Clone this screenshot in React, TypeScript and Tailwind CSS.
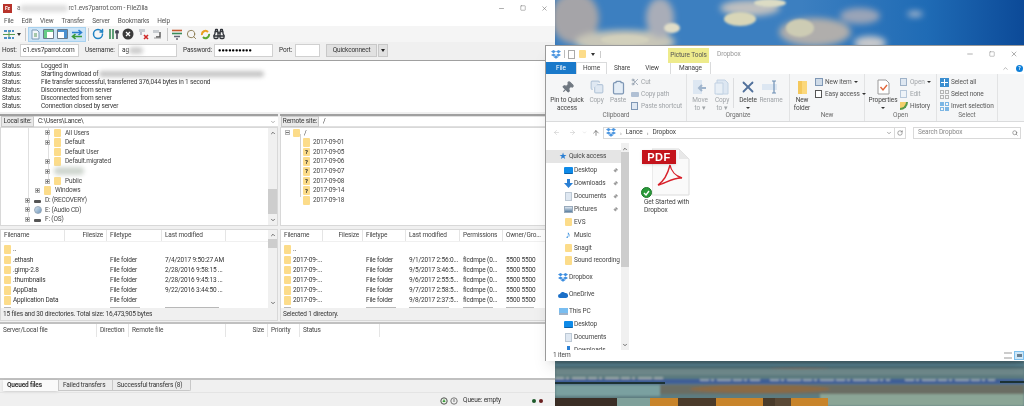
import { FC, ReactNode } from "react";
import {
  Binoculars,
  ChevronDown,
  ChevronUp,
  ArrowLeft,
  ArrowRight,
  ArrowUp,
  Clipboard,
  Copy,
  Minus,
  Pin,
  RotateCw,
  Scissors,
  Search,
  Square,
  X,
} from "lucide-react";

const logLines = [
  ["Status:", "Logged in"],
  ["Status:", "Starting download of"],
  ["Status:", "File transfer successful, transferred 376,044 bytes in 1 second"],
  ["Status:", "Disconnected from server"],
  ["Status:", "Disconnected from server"],
  ["Status:", "Connection closed by server"],
];

const localFiles = [
  ["..", "", "", ""],
  [".ethash", "", "File folder", "7/4/2017 9:50:27 AM"],
  [".gimp-2.8", "", "File folder", "2/28/2016 9:58:15 ..."],
  [".thumbnails", "", "File folder", "2/28/2016 9:45:13 ..."],
  ["AppData", "", "File folder", "9/22/2016 3:44:50 ..."],
  ["Application Data", "", "File folder", ""],
];

const remoteFiles = [
  ["..", "", "", "", "", ""],
  ["2017-09-...", "", "File folder", "9/1/2017 2:56:0...", "flcdmpe (0...", "5500 5500"],
  ["2017-09-...", "", "File folder", "9/5/2017 3:46:5...", "flcdmpe (0...", "5500 5500"],
  ["2017-09-...", "", "File folder", "9/6/2017 2:55:5...", "flcdmpe (0...", "5500 5500"],
  ["2017-09-...", "", "File folder", "9/7/2017 2:58:5...", "flcdmpe (0...", "5500 5500"],
  ["2017-09-...", "", "File folder", "9/8/2017 2:37:5...", "flcdmpe (0...", "5500 5500"],
];

const remoteDirs = [
  ["2017-09-01", false],
  ["2017-09-05", true],
  ["2017-09-06", true],
  ["2017-09-07", true],
  ["2017-09-08", true],
  ["2017-09-14", true],
  ["2017-09-18", false],
] as const;

const Folder: FC<{ q?: boolean }> = ({ q }) => (
  <span className="w-[7px] h-[8.5px] shrink-0 bg-[#fcdc8a] rounded-[1px] flex items-center justify-center text-[6px] font-bold leading-none text-[#222]">
    {q ? "?" : ""}
  </span>
);

const Expander: FC<{ minus?: boolean }> = ({ minus }) => (
  <span className="relative w-[5px] h-[5px] shrink-0 border border-[#b5b5b5] bg-[#f4f4f4] flex items-center justify-center">
    <span className="w-[3px] h-px bg-[#777]" />
    {!minus && <span className="absolute w-px h-[3px] bg-[#777]" />}
  </span>
);

const Redacted: FC<{ className: string }> = ({ className }) => (
  <span className={`inline-block blur-[2px] rounded-sm ${className}`} />
);

const TreeRow: FC<{ pad: string; label: string; expander?: boolean; icon?: ReactNode }> = ({
  pad,
  label,
  expander,
  icon,
}) => (
  <div className={`h-[9.65px] shrink-0 flex items-center ${pad}`}>
    <span className="w-[6px] mr-[3px] flex items-center">{expander && <Expander />}</span>
    {icon ?? <Folder />}
    <span className="ml-[4px]">{label}</span>
  </div>
);

const Drive: FC<{ cd?: boolean }> = ({ cd }) =>
  cd ? (
    <span className="w-[8px] h-[8px] shrink-0 rounded-full bg-gradient-to-br from-[#d8e4ee] to-[#6f98bd] border border-[#9ab] -mr-px" />
  ) : (
    <span className="w-[7px] h-[3px] shrink-0 bg-[#555] rounded-[1px] mt-[2px]" />
  );

const HeadCell: FC<{ w: string; right?: boolean; children?: ReactNode }> = ({ w, right, children }) => (
  <div className={`${w} shrink-0 h-full border-r border-[#e5e5e5] flex items-center px-[3px] ${right ? "justify-end" : ""}`}>
    {children}
  </div>
);

const SiteBar: FC<{ label: string; value: string; labelW: string; arrow?: boolean }> = ({ label, value, labelW, arrow }) => (
  <div className="h-[13px] shrink-0 flex items-center border-t-2 border-[#a0a0a0] bg-[#f0f0f0] pl-px">
    <div className={`${labelW} h-[11px] border border-[#c8c8c8] bg-[#e9e9e9] flex items-center justify-center whitespace-nowrap`}>{label}</div>
    <div className="flex-1 h-[11px] bg-white border-y border-[#e0e0e0] flex items-center pl-[4px] justify-between">
      {value}
      {arrow && <ChevronDown size={6} className="mr-[2px] text-[#666]" />}
    </div>
  </div>
);

const ScrollTrack: FC<{ thumbTop: string; thumbH: string }> = ({ thumbTop, thumbH }) => (
  <div className="w-[9px] shrink-0 bg-[#f0f0f0] flex flex-col items-center justify-between py-[2px] relative">
    <ChevronUp size={6} strokeWidth={3} className="text-[#444]" />
    <span className={`absolute left-0 w-[9px] bg-[#cdcdcd] ${thumbTop} ${thumbH}`} />
    <ChevronDown size={6} strokeWidth={3} className="text-[#444]" />
  </div>
);

// the row that is cut by the status line only shows its top, so grey smudges stand in for it
const FileRows: FC<{ rows: string[][]; widths: string[]; sliver: string[] }> = ({ rows, widths, sliver }) => (
  <div className="h-[67px] overflow-hidden pt-[2.5px]">
    {rows.map((r, i) => (
      <div key={i} className="h-[10.2px] flex items-center">
        {r.map((c, j) => (
          <div key={j} className={`${widths[j]} shrink-0 px-[3px] flex items-center whitespace-nowrap`}>
            {j === 0 && <span className="mr-[2px]"><Folder /></span>}
            {c}
          </div>
        ))}
      </div>
    ))}
    <div className="flex pt-[1.5px]">
      {sliver.map((s, j) => (
        <div key={j} className={`${widths[j]} shrink-0 px-[3px]`}>
          <span className={`block h-[2px] bg-[#b8b8b8] ${s}`} />
        </div>
      ))}
    </div>
  </div>
);

const TbIcon: FC<{ children: ReactNode; w?: string }> = ({ children, w = "w-[14px]" }) => (
  <span className={`${w} h-[14px] flex items-center justify-center shrink-0`}>{children}</span>
);

const Sep = () => <span className="w-px h-[13px] bg-[#c8c8c8] mx-[2px] shrink-0" />;

const Toolbar: FC = () => (
  <div className="h-[16px] flex items-center pl-[2px] bg-[#f5f5f5]">
    <TbIcon>
      <svg width="12" height="11" viewBox="0 0 12 11">
        <path d="M1 1h3v2H1zM5 1h3v2H5zM9 1h2v2H9zM1 8h3v2H1zM5 8h3v2H5zM9 8h2v2H9z" fill="#4b8fc4" />
        <path d="M0 5.5h12M6 3v5" stroke="#5a9a50" strokeWidth="1" />
      </svg>
    </TbIcon>
    <span className="ml-[1px] mr-[2px] w-0 h-0 border-x-[2.5px] border-x-transparent border-t-[3px] border-t-[#333]" />
    <Sep />
    <div className="flex items-center h-[15px] w-[58px] bg-[#cce4f7] border border-[#a8d2f0] justify-around">
      <svg width="9" height="11" viewBox="0 0 9 11"><path d="M1 1h5l2 2v7H1z" fill="#f2f6fa" stroke="#7a9ab5" /><path d="M3 5h3M3 7h3" stroke="#5b9a5b" /></svg>
      <svg width="11" height="10" viewBox="0 0 11 10"><path d="M.5.5h10v9H.5z" fill="#fff" stroke="#6a7a8a" /><path d="M1 1h9v2H1z" fill="#6c8" /><path d="M1 3h3v6H1z" fill="#6c8" /></svg>
      <svg width="11" height="10" viewBox="0 0 11 10"><path d="M.5.5h10v9H.5z" fill="#fff" stroke="#6a7a8a" /><path d="M1 1h9v2H1z" fill="#4a90d0" /><path d="M7 3h3v6H7z" fill="#4a90d0" /></svg>
      <svg width="12" height="11" viewBox="0 0 12 11"><path d="M1 3.5h9M7.5 1l3 2.5-3 2.5" fill="none" stroke="#2b7fd0" strokeWidth="1.6" /><path d="M11 7.5H2M4.5 5l-3 2.5 3 2.5" fill="none" stroke="#3a9a3a" strokeWidth="1.6" /></svg>
    </div>
    <Sep />
    <TbIcon><RotateCw size={12} strokeWidth={3} className="text-[#1f83c4]" /></TbIcon>
    <span className="w-[2px]" />
    <TbIcon>
      <svg width="12" height="12" viewBox="0 0 12 12"><path d="M2 1v10M5 1v10" stroke="#3a8a5a" strokeWidth="1.6" /><circle cx="9" cy="4" r="2" fill="#445" /><path d="M9 6v5" stroke="#445" strokeWidth="1.6" /></svg>
    </TbIcon>
    <TbIcon>
      <svg width="12" height="12" viewBox="0 0 12 12"><circle cx="6" cy="6" r="5.5" fill="#3a3a3a" /><path d="M4 4l4 4M8 4l-4 4" stroke="#fff" strokeWidth="1.3" /></svg>
    </TbIcon>
    <span className="w-[2px]" />
    <TbIcon>
      <svg width="12" height="12" viewBox="0 0 12 12"><path d="M1 1h6v3H1z" fill="#c8ccd0" /><path d="M3 4v3" stroke="#889" /><path d="M6 7l4 4M10 7l-4 4" stroke="#d02828" strokeWidth="1.6" /></svg>
    </TbIcon>
    <TbIcon>
      <svg width="12" height="12" viewBox="0 0 12 12"><path d="M1 2h6v3H1z" fill="#c8ccd0" /><path d="M8 4v5H4" fill="none" stroke="#555" strokeWidth="1.4" /><path d="M2 10h7" stroke="#999" /></svg>
    </TbIcon>
    <Sep />
    <TbIcon>
      <svg width="12" height="11" viewBox="0 0 12 11"><path d="M1 1.5h10" stroke="#c85a30" strokeWidth="1.6" /><path d="M1 4.5h10" stroke="#3a8a5a" strokeWidth="1.6" /><path d="M3 7.5h6M5 10h2" stroke="#667" strokeWidth="1.4" /></svg>
    </TbIcon>
    <TbIcon><Search size={11} strokeWidth={2} className="text-[#8a7a50]" /></TbIcon>
    <TbIcon>
      <svg width="11" height="11" viewBox="0 0 11 11"><path d="M2 6a3.5 3.5 0 0 1 6-3" fill="none" stroke="#e8a020" strokeWidth="2" /><path d="M9 5a3.5 3.5 0 0 1-6 3" fill="none" stroke="#5aa830" strokeWidth="2" /></svg>
    </TbIcon>
    <TbIcon><Binoculars size={12} strokeWidth={2.6} className="text-[#30343a]" /></TbIcon>
  </div>
);

const FileZilla: FC = () => (
  <div className="absolute left-0 top-0 w-[555px] h-[406px] bg-[#f0f0f0] flex flex-col text-[6.5px] tracking-[-0.15px] leading-none text-[#333] font-['Roboto',sans-serif] shadow">
    <div className="h-[16px] bg-white flex items-center relative pl-[3px]">
      <span className="w-[9px] h-[9px] bg-[#b8332b] text-white text-[5px] font-bold flex items-center justify-center mr-[5px]">Fz</span>
      <span className="text-[#555] flex items-center">
        a
        <Redacted className="w-[48px] h-[7px] bg-[#ddd]" />
        rc1.evs7parrot.com - FileZilla
      </span>
      <div className="ml-auto flex items-center gap-[15px] pr-[7px] text-[#777]">
        <Minus size={7} />
        <Square size={6} />
        <X size={7} />
      </div>
    </div>
    <div className="h-[10px] bg-white flex items-center gap-[8px] pl-[4px] text-[#555]">
      {["File", "Edit", "View", "Transfer", "Server", "Bookmarks", "Help"].map((m) => (
        <span key={m}>{m}</span>
      ))}
    </div>
    <Toolbar />
    <div className="h-[18px] flex items-center pl-[2px] pb-[1px]">
      <span className="w-[18px]">Host:</span>
      <div className="w-[59px] h-[13px] bg-white border border-[#d0d0d0] flex items-center overflow-hidden pl-[2px] whitespace-nowrap">c1.evs7parrot.com</div>
      <span className="ml-[6px] w-[33px]">Username:</span>
      <div className="w-[59px] h-[13px] bg-white border border-[#d0d0d0] flex items-center pl-[3px]">
        ag
        <Redacted className="w-[14px] h-[7px] bg-[#ccc]" />
      </div>
      <span className="ml-[6px] w-[31px]">Password:</span>
      <div className="w-[59px] h-[13px] bg-white border border-[#d0d0d0] flex items-center pl-[3px] text-black text-[5.6px] tracking-normal font-bold whitespace-nowrap">●●●●●●●●●●</div>
      <span className="ml-[6px] w-[16px]">Port:</span>
      <div className="w-[25px] h-[13px] bg-white border border-[#d0d0d0]" />
      <div className="ml-[6px] w-[51px] h-[13px] bg-[#e1e1e1] border border-[#c8c8c8] flex items-center justify-center">Quickconnect</div>
      <div className="ml-px w-[10px] h-[13px] bg-[#e1e1e1] border border-[#c8c8c8] flex items-center justify-center">
        <span className="w-0 h-0 border-x-[2px] border-x-transparent border-t-[3px] border-t-[#222]" />
      </div>
    </div>
    <div className="h-[52px] bg-white border-t border-[#a0a0a0] py-[1px] pl-[2px] mb-[2px]">
      {logLines.map(([s, t], i) => (
        <div key={i} className="h-[8px] flex items-center whitespace-nowrap">
          <span className="w-[39px]">{s}</span>
          {t}
          {i === 1 && <Redacted className="ml-px w-[165px] h-[6px] bg-[#c4c4c4]" />}
        </div>
      ))}
    </div>
    <div className="flex h-[207px]">
      <div className="w-[278px] shrink-0 flex flex-col">
        <SiteBar label="Local site:" labelW="w-[33px]" value={"C:\\Users\\Lance\\"} arrow />
        <div className="h-[99px] shrink-0 bg-white flex border border-[#d8d8d8] relative">
          <div className="flex-1 text-[#444] overflow-hidden relative">
            <span className="absolute left-[27px] top-0 bottom-[5px] w-px bg-[#e0e0e0]" />
            <span className="absolute left-[47px] top-0 h-[55px] w-px bg-[#e0e0e0]" />
            <TreeRow pad="pl-[44px]" label="All Users" expander />
            <TreeRow pad="pl-[44px]" label="Default" expander />
            <TreeRow pad="pl-[44px]" label="Default User" />
            <TreeRow pad="pl-[44px]" label="Default.migrated" expander />
            <div className="h-[9.65px] flex items-center pl-[44px]">
              <span className="w-[6px] mr-[3px]"><Expander /></span>
              <Redacted className="w-[30px] h-[8px] bg-[#cfd6cf]" />
            </div>
            <TreeRow pad="pl-[44px]" label="Public" expander />
            <TreeRow pad="pl-[34px]" label="Windows" expander />
            <TreeRow pad="pl-[24px]" label="D: (RECOVERY)" expander icon={<Drive />} />
            <TreeRow pad="pl-[24px]" label="E: (Audio CD)" expander icon={<Drive cd />} />
            <TreeRow pad="pl-[24px]" label="F: (OS)" expander icon={<Drive />} />
          </div>
          <ScrollTrack thumbTop="top-[61px]" thumbH="h-[25px]" />
        </div>
        <div className="h-[3px] shrink-0" />
        <div className="h-[92px] flex flex-col border border-[#d8d8d8] bg-white">
          <div className="flex flex-1 min-h-0">
            <div className="flex-1 min-w-0">
              <div className="h-[12px] flex items-center border-b border-[#f0f0f0] text-[#444]">
                <HeadCell w="w-[64px]">Filename</HeadCell>
                <HeadCell w="w-[42px]" right>Filesize</HeadCell>
                <HeadCell w="w-[55px]">Filetype</HeadCell>
                <HeadCell w="w-[64px]">Last modified</HeadCell>
              </div>
              <FileRows
                rows={localFiles}
                widths={["w-[64px]", "w-[42px]", "w-[55px]", "w-[84px]"]}
                sliver={["w-[7px]", "w-0", "w-[30px]", "w-[54px]"]}
              />
            </div>
            <ScrollTrack thumbTop="top-[9px]" thumbH="h-[9px]" />
          </div>
          <div className="h-[12px] shrink-0 bg-[#f0f0f0] flex items-center pl-[2px]">15 files and 30 directories. Total size: 16,473,905 bytes</div>
        </div>
      </div>
      <div className="w-[2px] shrink-0" />
      <div className="flex-1 min-w-0 flex flex-col">
        <SiteBar label="Remote site:" labelW="w-[38px]" value="/" />
        <div className="h-[99px] shrink-0 bg-white border border-[#d8d8d8] pl-[4px] text-[#444] relative">
          <span className="absolute left-[19px] top-[6px] h-[63px] w-px bg-[#d0d0d0]" />
          <div className="h-[9.65px] flex items-center">
            <span className="mr-[3px]"><Expander minus /></span>
            <Folder />
            <span className="ml-[4px]">/</span>
          </div>
          {remoteDirs.map(([d, q]) => (
            <div key={d} className="h-[9.65px] flex items-center pl-[18px] relative">
              <Folder q={q} />
              <span className="ml-[3px]">{d}</span>
            </div>
          ))}
        </div>
        <div className="h-[3px] shrink-0" />
        <div className="h-[92px] flex flex-col border border-[#d8d8d8] bg-white">
          <div className="h-[12px] shrink-0 flex items-center border-b border-[#f0f0f0] text-[#444]">
            <HeadCell w="w-[42px]">Filename</HeadCell>
            <HeadCell w="w-[40px]" right>Filesize</HeadCell>
            <HeadCell w="w-[43px]">Filetype</HeadCell>
            <HeadCell w="w-[54px]">Last modified</HeadCell>
            <HeadCell w="w-[43px]">Permissions</HeadCell>
            <HeadCell w="w-[50px]">Owner/Gro...</HeadCell>
          </div>
          <FileRows
            rows={remoteFiles}
            widths={["w-[42px]", "w-[40px]", "w-[43px]", "w-[54px]", "w-[43px]", "w-[50px]"]}
            sliver={["w-[7px]", "w-0", "w-[30px]", "w-[40px]", "w-[30px]", "w-[28px]"]}
          />
          <div className="h-[12px] mt-auto shrink-0 bg-[#f0f0f0] flex items-center pl-[2px]">Selected 1 directory.</div>
        </div>
      </div>
    </div>
    <div className="h-[1px]" />
    <div className="h-[56px] bg-white border-t-2 border-[#c0c0c0] overflow-hidden">
      <div className="h-[13px] flex items-center text-[#444]">
        <HeadCell w="w-[97px]">Server/Local file</HeadCell>
        <HeadCell w="w-[32px]">Direction</HeadCell>
        <HeadCell w="w-[97px]">Remote file</HeadCell>
        <HeadCell w="w-[42px]" right>Size</HeadCell>
        <HeadCell w="w-[32px]">Priority</HeadCell>
        <HeadCell w="w-[80px]">Status</HeadCell>
      </div>
    </div>
    <div className="h-[14px] border-t-2 border-[#c0c0c0] flex items-start pl-[3px] bg-[#f0f0f0]">
      <div className="w-[55px] h-[11px] bg-[#fafafa] flex items-center pl-[4px] font-bold shadow-sm whitespace-nowrap">Queued files</div>
      <div className="w-[55px] h-[11px] bg-[#ececec] border border-t-0 border-[#c8c8c8] flex items-center pl-[4px] whitespace-nowrap">Failed transfers</div>
      <div className="w-[78px] h-[11px] bg-[#ececec] border border-t-0 border-l-0 border-[#c8c8c8] rounded-br-[2px] flex items-center pl-[4px] whitespace-nowrap">Successful transfers (8)</div>
    </div>
    <div className="flex-1 flex items-center justify-end border-t border-[#e4e4e4] pt-[2px]">
      <svg width="8" height="8" viewBox="0 0 8 8" className="mr-[2px]"><circle cx="4" cy="4" r="3.2" fill="#e4efe0" stroke="#555" strokeWidth="1" /><path d="M4 2l1.5 3h-3z" fill="#3a9a3a" /></svg>
      <svg width="8" height="8" viewBox="0 0 8 8" className="mr-[5px]"><circle cx="4" cy="4" r="3.2" fill="#eee" stroke="#777" strokeWidth="1" /><path d="M4 2v3" stroke="#777" /></svg>
      <span>Queue: empty</span>
      <span className="ml-[31px] w-[4px] h-[4px] rounded-full bg-[#1d5a2a]" />
      <span className="ml-[3px] w-[4px] h-[4px] rounded-full bg-[#6a1f1f]" />
      <span className="w-[12px]" />
    </div>
  </div>
);

const Group: FC<{ w: string; label: string; pl?: string; children: ReactNode }> = ({ w, label, pl = "", children }) => (
  <div className={`${w} shrink-0 h-full border-r border-[#e2e3e4] flex flex-col`}>
    <div className={`flex-1 flex items-start pt-[2px] ${pl}`}>{children}</div>
    <div className="h-[11px] text-center text-[#6d6d6d]">{label}</div>
  </div>
);

const Big: FC<{ icon: ReactNode; lines: string[]; w: string; dim?: boolean; arrow?: boolean }> = ({ icon, lines, w, dim, arrow }) => (
  <div className={`${w} shrink-0 flex flex-col items-center ${dim ? "text-[#a0a4a8]" : "text-[#444]"}`}>
    <div className="h-[18px] mt-[2px] flex items-center justify-center">{icon}</div>
    <div className="mt-px leading-[7.5px] text-center whitespace-nowrap">
      {lines.map((l) => (
        <div key={l}>{l}</div>
      ))}
      {arrow && <div className="flex justify-center pt-[2px]"><span className="w-0 h-0 border-x-[2px] border-x-transparent border-t-[2.5px] border-t-[#333]" /></div>}
    </div>
  </div>
);

const Small: FC<{ icon: ReactNode; label: string; dim?: boolean; arrow?: boolean }> = ({ icon, label, dim, arrow }) => (
  <div className={`h-[12px] flex items-center whitespace-nowrap ${dim ? "text-[#a0a4a8]" : "text-[#555]"}`}>
    <span className="w-[9px] h-[9px] mr-[2px] flex items-center justify-center">{icon}</span>
    {label}
    {arrow && <span className="ml-[2px] w-0 h-0 border-x-[2px] border-x-transparent border-t-[2.5px] border-t-[#333]" />}
  </div>
);

const PageIcon: FC<{ stroke?: string; fill?: string; children?: ReactNode }> = ({ stroke = "#9fb2c8", fill = "#e4edf6", children }) => (
  <svg width="13" height="16" viewBox="0 0 13 16">
    <path d="M1 1h8l3 3v11H1z" fill={fill} stroke={stroke} />
    {children}
  </svg>
);

const Ribbon: FC = () => (
  <div className="h-[48px] shrink-0 bg-[#f5f6f7] border-b border-[#dadbdc] flex">
    <Group w="w-[141px]" pl="pl-[2px]" label="Clipboard">
      <Big w="w-[38px]" lines={["Pin to Quick", "access"]} icon={<Pin size={13} fill="#6f7780" className="text-[#6f7780] rotate-45" />} />
      <Big w="w-[21px]" dim lines={["Copy"]} icon={<Copy size={14} className="text-[#b6c7da]" fill="#dfe8f2" />} />
      <Big w="w-[22px]" dim lines={["Paste"]} icon={<Clipboard size={15} className="text-[#7e97b5]" fill="#e4edf6" />} />
      <div className="ml-px flex flex-col">
        <Small dim icon={<Scissors size={8} className="text-[#7e8ea0]" />} label="Cut" />
        <Small dim icon={<span className="w-[8px] h-[5px] bg-[#b0c0d4] rounded-[1px]" />} label="Copy path" />
        <Small dim icon={<span className="w-[7px] h-[8px] bg-[#dfe8f2] border border-[#7e97b5]" />} label="Paste shortcut" />
      </div>
    </Group>
    <Group w="w-[103px]" pl="pl-[2px]" label="Organize">
      <Big w="w-[22px]" dim lines={["Move", "to ▾"]} icon={<svg width="16" height="16" viewBox="0 0 16 16"><path d="M1 1h9v14H1z" fill="#dde7f2" /><path d="M14 9H7M10 6L7 9l3 3" fill="none" stroke="#9fb4cc" strokeWidth="2" /></svg>} />
      <Big w="w-[22px]" dim lines={["Copy", "to ▾"]} icon={<svg width="16" height="16" viewBox="0 0 16 16"><path d="M3 1h8l3 3v11H3z" fill="#dde7f2" stroke="#c2d2e3" /><path d="M1 4h8v11H1z" fill="#e8eff6" stroke="#c2d2e3" /></svg>} />
      <span className="w-px h-[30px] bg-[#dcdddf] mt-[2px] mr-[3px]" />
      <Big w="w-[22px]" arrow lines={["Delete"]} icon={<X size={18} strokeWidth={2.4} className="text-[#52719c]" />} />
      <Big w="w-[24px]" dim lines={["Rename"]} icon={<svg width="18" height="14" viewBox="0 0 18 14"><path d="M0 4h15v6H0z" fill="#dde7f2" /><path d="M12 1v12M10 1h4M10 13h4" stroke="#6f90b5" strokeWidth="1.2" fill="none" /></svg>} />
    </Group>
    <Group w="w-[75px]" label="New">
      <Big w="w-[24px]" lines={["New", "folder"]} icon={<svg width="11" height="15" viewBox="0 0 11 15"><path d="M1 1h9v13H1z" fill="#fbd87c" /><path d="M1 1h4v13H1z" fill="#f4c85c" /></svg>} />
      <div className="flex flex-col">
        <Small icon={<span className="w-[8px] h-[8px] bg-[#cfdbe8] border border-[#7e97b5]" />} label="New item" arrow />
        <Small icon={<span className="w-[7px] h-[8px] bg-white border border-[#555]" />} label="Easy access" arrow />
      </div>
    </Group>
    <Group w="w-[72px]" pl="pl-[2px]" label="Open">
      <Big w="w-[32px]" arrow lines={["Properties"]} icon={<PageIcon stroke="#9a9a9a" fill="#fff"><path d="M3.5 8l2.5 3 4-5" fill="none" stroke="#e0663a" strokeWidth="1.4" /></PageIcon>} />
      <div className="flex flex-col">
        <Small dim icon={<span className="w-[7px] h-[8px] bg-[#dfe8f2] border border-[#9fb2c8]" />} label="Open" arrow />
        <Small dim icon={<span className="w-[7px] h-[8px] bg-[#eef3f8] border border-[#b6c7da]" />} label="Edit" />
        <Small icon={<span className="w-[8px] h-[8px] bg-[#f4cf6c] rounded-br-full border-r-2 border-b-2 border-[#5a9a4a]" />} label="History" />
      </div>
    </Group>
    <Group w="w-[61px]" pl="pl-[3px]" label="Select">
      <div className="flex flex-col">
        <Small icon={<span className="w-[9px] h-[9px] grid grid-cols-2 gap-px bg-white border border-[#3a8ed0]"><i className="bg-[#3a8ed0]" /><i className="bg-[#3a8ed0]" /><i className="bg-[#3a8ed0]" /><i className="bg-[#3a8ed0]" /></span>} label="Select all" />
        <Small icon={<span className="w-[9px] h-[9px] grid grid-cols-2 gap-px"><i className="border border-[#b5b5b5]" /><i className="border border-[#b5b5b5]" /><i className="border border-[#b5b5b5]" /><i className="border border-[#b5b5b5]" /></span>} label="Select none" />
        <Small icon={<span className="w-[9px] h-[9px] grid grid-cols-2 gap-px"><i className="bg-[#7cb6e4]" /><i className="border border-[#7cb6e4]" /><i className="border border-[#7cb6e4]" /><i className="bg-[#7cb6e4]" /></span>} label="Invert selection" />
      </div>
    </Group>
  </div>
);

const DropboxGlyph: FC<{ c?: string }> = ({ c = "#4c96e0" }) => (
  <svg width="10" height="9" viewBox="0 0 10 9">
    <path d="M2.5 0L5 1.6 2.5 3.2 0 1.6zM7.5 0L10 1.6 7.5 3.2 5 1.6zM2.5 3.4L5 5 2.5 6.6 0 5zM7.5 3.4L10 5 7.5 6.6 5 5zM5 5.4L7.5 7 5 8.8 2.5 7z" fill={c} />
  </svg>
);

const QuickIcon: FC<{ kind: string }> = ({ kind }) => {
  if (kind === "desktop") return <span className="w-[9px] h-[7px] bg-[#0e8ae8] rounded-[1px] border-b border-[#0a5fa8]" />;
  if (kind === "down") return <svg width="9" height="9" viewBox="0 0 9 9"><path d="M3 0h3v4h3L4.5 9 0 4h3z" fill="#2a7fd4" /></svg>;
  if (kind === "doc") return <span className="w-[7px] h-[9px] bg-[#dfe8f2] border border-[#bcc8d4]" />;
  if (kind === "pic") return <span className="w-[9px] h-[7px] bg-gradient-to-b from-[#dfe8f2] to-[#5a7f9f] border border-[#9ab]" />;
  if (kind === "music") return <span className="text-[#1a7fd8] text-[10px] leading-none font-bold">♪</span>;
  return <Folder />;
};

const NavItem: FC<{ label: string; kind: string; pinned?: boolean }> = ({ label, kind, pinned }) => (
  <div className="h-[12.9px] shrink-0 flex items-center pl-[17px] pr-[3px] whitespace-nowrap overflow-hidden">
    <span className="w-[10px] flex justify-center shrink-0"><QuickIcon kind={kind} /></span>
    <span className="ml-[1px]">{label}</span>
    {pinned && <Pin size={5} className="ml-auto text-[#999] rotate-45" fill="#999" />}
  </div>
);

const NavRoot: FC<{ label: string; icon: ReactNode; className?: string }> = ({ label, icon, className }) => (
  <div className={`h-[13px] shrink-0 flex items-center pl-[12px] whitespace-nowrap ${className ?? ""}`}>
    <span className="w-[10px] flex justify-center shrink-0">{icon}</span>
    <span className="ml-px">{label}</span>
  </div>
);

const PdfIcon: FC = () => (
  <div className="relative w-[50px] h-[50px]">
    <svg width="38" height="48" viewBox="0 0 38 48" className="absolute left-[10px] top-0">
      <path d="M0 1h27l10 10v36H0z" fill="#fafafa" stroke="#dcdcdc" />
      <path d="M27 1v10h10z" fill="#e8e8e8" />
      <path d="M18 17c-2 8-6 16-12 20 6-1 16-8 24-7-6-2-11-7-12-13z" fill="none" stroke="#d8202a" strokeWidth="1.4" />
    </svg>
    <div className="absolute left-0 top-[2px] w-[34px] h-[14px] bg-[#c4141c] text-white font-bold text-[11px] tracking-[0.5px] flex items-center justify-center shadow font-['Liberation_Sans',sans-serif]">PDF</div>
    <div className="absolute -left-px top-[39px] w-[11px] h-[11px] rounded-full bg-[#2a9a3a] border border-[#1d7a2a] flex items-center justify-center">
      <svg width="7" height="6" viewBox="0 0 7 6"><path d="M1 3l2 2 3-4" fill="none" stroke="#fff" strokeWidth="1.4" /></svg>
    </div>
  </div>
);

const Explorer: FC = () => (
  <div className="absolute left-[545px] top-[45px] w-[479px] h-[316px] bg-white flex flex-col text-[6.5px] tracking-[-0.1px] leading-none text-[#444] font-['Roboto',sans-serif] border-l border-t border-[#9a9a9a] shadow-lg">
    <div className="h-[16px] shrink-0 flex items-center pl-[5px] relative">
      <DropboxGlyph />
      <span className="w-px h-[8px] bg-[#bbb] mx-[3px]" />
      <span className="w-[7px] h-[9px] bg-white border border-[#aaa]" />
      <span className="ml-[4px]"><Folder /></span>
      <span className="ml-[5px] w-0 h-0 border-x-[2px] border-x-transparent border-t-[3px] border-t-[#333]" />
      <span className="w-px h-[7px] bg-[#ccc] ml-[5px]" />
      <div className="ml-[67px] h-[15px] w-[41px] bg-[#eeeb8c] flex items-center justify-center text-[#555] mt-[2px] whitespace-nowrap">Picture Tools</div>
      <span className="ml-[8px] text-[#999]">Dropbox</span>
      <div className="ml-auto flex items-center gap-[15px] pr-[6px] text-[#888]">
        <Minus size={8} />
        <Square size={6} />
        <X size={8} />
      </div>
    </div>
    <div className="h-[12px] shrink-0 flex items-stretch">
      <div className="w-[30px] bg-[#1979ca] text-white flex items-center justify-center">File</div>
      <div className="w-[31px] border-x border-t border-[#dadbdc] flex items-center justify-center">Home</div>
      <div className="w-[30px] flex items-center justify-center">Share</div>
      <div className="w-[30px] flex items-center justify-center">View</div>
      <div className="ml-[3px] w-[41px] border-x border-[#dadbdc] flex items-center justify-center">Manage</div>
      <div className="ml-auto flex items-center gap-[7px] pr-px">
        <ChevronUp size={7} className="text-[#888]" />
        <span className="w-[7px] h-[7px] rounded-full bg-[#0e7fd8] text-white text-[5px] font-bold flex items-center justify-center">?</span>
      </div>
    </div>
    <Ribbon />
    <div className="h-[21px] flex items-center pl-[7px] relative shrink-0">
      <ArrowLeft size={7} className="text-[#c8c8c8]" />
      <ArrowRight size={7} className="text-[#c8c8c8] ml-[9px]" />
      <ChevronDown size={5} className="text-[#ccc] ml-[6px]" />
      <ArrowUp size={8} className="text-[#555] ml-[5px]" />
      <div className="ml-[3px] w-[303px] h-[12px] border border-[#d9d9d9] flex items-center pl-[2px]">
        <DropboxGlyph />
        <span className="ml-[4px] text-[#777] text-[6px]">›</span>
        <span className="ml-[4px]">Lance</span>
        <span className="ml-[4px] text-[#777] text-[6px]">›</span>
        <span className="ml-[4px]">Dropbox</span>
        <ChevronDown size={6} className="ml-auto text-[#555]" />
        <span className="w-px h-[10px] bg-[#d9d9d9] mx-[2px]" />
        <RotateCw size={6} className="mr-[2px] text-[#555]" />
      </div>
      <div className="ml-[7px] w-[108px] h-[12px] border border-[#d9d9d9] flex items-center pl-[4px] text-[#8a8a8a]">
        Search Dropbox
        <Search size={6} className="ml-auto mr-[2px] text-[#555]" />
      </div>
    </div>
    <div className="flex-1 flex min-h-0">
      <div className="w-[75px] shrink-0 flex flex-col overflow-hidden pt-[7px]">
        <NavRoot className="bg-[#e5e5e5]" label="Quick access" icon={<span className="text-[#2a7fd4] text-[9px] leading-none">★</span>} />
        <div className="h-[1px] shrink-0" />
        <NavItem label="Desktop" kind="desktop" pinned />
        <NavItem label="Downloads" kind="down" pinned />
        <NavItem label="Documents" kind="doc" pinned />
        <NavItem label="Pictures" kind="pic" pinned />
        <NavItem label="EVS" kind="folder" />
        <NavItem label="Music" kind="music" />
        <NavItem label="Snagit" kind="folder" />
        <NavItem label="Sound recording" kind="folder" />
        <NavRoot className="mt-[4px]" label="Dropbox" icon={<DropboxGlyph c="#3d8ee0" />} />
        <NavRoot className="mt-[4px]" label="OneDrive" icon={<svg width="10" height="6" viewBox="0 0 10 6"><path d="M2 6a2 2 0 0 1 0-4 3 3 0 0 1 5-1 2.5 2.5 0 0 1 1 5z" fill="#1a6fc8" /></svg>} />
        <NavRoot className="mt-[4px]" label="This PC" icon={<span className="w-[9px] h-[7px] bg-[#79bdf0] border-b-2 border-[#9fb2c8]" />} />
        <NavItem label="Desktop" kind="desktop" />
        <NavItem label="Documents" kind="doc" />
        <NavItem label="Downloads" kind="down" />
      </div>
      <div className="w-[8px] shrink-0 bg-[#f0f0f0] relative flex flex-col items-center justify-between">
        <ChevronUp size={6} strokeWidth={3} className="text-[#444] mt-[3px] relative z-10" />
        <span className="absolute top-[9px] left-0 w-[8px] h-[115px] bg-[#cdcdcd]" />
        <ChevronDown size={6} strokeWidth={3} className="text-[#444] mb-[2px]" />
      </div>
      <div className="flex-1 pt-[5px] pl-[13px]">
        <PdfIcon />
        <div className="ml-[2px] leading-[8px]">
          Get Started with
          <br />
          Dropbox
        </div>
      </div>
    </div>
    <div className="h-[11px] shrink-0 flex items-center pl-[7px] relative">
      1 item
      <div className="ml-auto flex items-center">
        <span className="w-[8px] h-[7px] border-y-2 border-[#ccc] mr-[2px]" />
        <span className="w-[10px] h-[9px] bg-[#cde6f7] border border-[#7cc0ee] flex items-center justify-center">
          <span className="w-[5px] h-[3px] bg-[#6a7f8f]" />
        </span>
      </div>
    </div>
  </div>
);

const Wallpaper: FC = () => (
  <svg width="1024" height="406" viewBox="0 0 1024 406" className="absolute inset-0">
    <defs>
      <linearGradient id="sky" x1="0" x2="1" y1="0" y2="0">
        <stop offset="0.54" stopColor="#3c7fc0" />
        <stop offset="0.8" stopColor="#1f6bb5" />
        <stop offset="1" stopColor="#0c4a98" />
      </linearGradient>
      <filter id="soft"><feGaussianBlur stdDeviation="3" /></filter>
      <filter id="soft2"><feGaussianBlur stdDeviation="1" /></filter>
      <filter id="soft3"><feGaussianBlur stdDeviation="0.6" /></filter>
    </defs>
    <rect x="540" y="0" width="484" height="46" fill="url(#sky)" />
    <g filter="url(#soft)">
      <ellipse cx="575" cy="18" rx="24" ry="26" fill="#a5a4a8" />
      <ellipse cx="625" cy="42" rx="50" ry="12" fill="#c8c6b8" />
      <ellipse cx="660" cy="18" rx="14" ry="20" fill="#a9adb8" />
      <ellipse cx="750" cy="8" rx="30" ry="8" fill="#bfc0c0" />
      <ellipse cx="815" cy="32" rx="36" ry="14" fill="#b0aeac" />
      <ellipse cx="860" cy="16" rx="20" ry="8" fill="#9aa4b8" />
      <ellipse cx="870" cy="43" rx="16" ry="7" fill="#c8c9cc" />
      <ellipse cx="915" cy="14" rx="8" ry="3" fill="#a8b8cc" />
    </g>
    <g filter="url(#soft2)">
      <ellipse cx="740" cy="19" rx="16" ry="7" fill="#d8d6b8" />
      <ellipse cx="770" cy="3" rx="16" ry="4" fill="#dcdcc4" />
      <ellipse cx="672" cy="28" rx="8" ry="5" fill="#e0ddc8" />
      <ellipse cx="800" cy="28" rx="14" ry="9" fill="#cdccb4" />
      <ellipse cx="625" cy="40" rx="24" ry="5" fill="#d2d0bc" />
    </g>
    <rect x="555" y="361" width="469" height="45" fill="#5d7c80" />
    <g filter="url(#soft2)">
      <rect x="555" y="359" width="469" height="9" fill="#47666f" />
      <rect x="555" y="364" width="469" height="2" fill="#5a8796" />
      <ellipse cx="800" cy="371" rx="45" ry="3" fill="#8a6f58" />
      <rect x="555" y="369" width="469" height="6" fill="#6f8a8c" />
      <rect x="555" y="379" width="469" height="5" fill="#3f5f98" />
      <rect x="555" y="385" width="105" height="11" fill="#7aa0a0" />
      <rect x="660" y="385" width="364" height="9" fill="#6b6d64" />
      <ellipse cx="760" cy="389" rx="70" ry="4" fill="#8a6a44" />
      <rect x="820" y="394" width="204" height="12" fill="#8ba596" />
      <path d="M555 378h110M700 380h60M770 380h120M905 380h90" stroke="#d4d6cc" strokeWidth="1.5" strokeDasharray="9 2 3 3 14 2" opacity="0.75" />
    </g>
    <g filter="url(#soft3)">
      <rect x="555" y="382" width="110" height="2" fill="#1e3034" />
      <rect x="1000" y="381" width="24" height="2" fill="#1e3034" />
      <rect x="555" y="398" width="62" height="8" fill="#3a2e26" />
      <rect x="617" y="398" width="33" height="8" fill="#7fa09a" />
      <rect x="650" y="398" width="178" height="8" fill="#c8842c" />
      <rect x="678" y="398" width="38" height="8" fill="#4c3a2a" />
      <rect x="763" y="398" width="12" height="8" fill="#4a3a2c" />
      <rect x="775" y="398" width="16" height="8" fill="#5a4a34" />
    </g>
  </svg>
);

const App: FC = () => (
  <div className="relative w-[1024px] h-[406px] overflow-hidden bg-[#3a6a9a] blur-[0.35px]">
    <Wallpaper />
    <FileZilla />
    <Explorer />
  </div>
);

export default App;
